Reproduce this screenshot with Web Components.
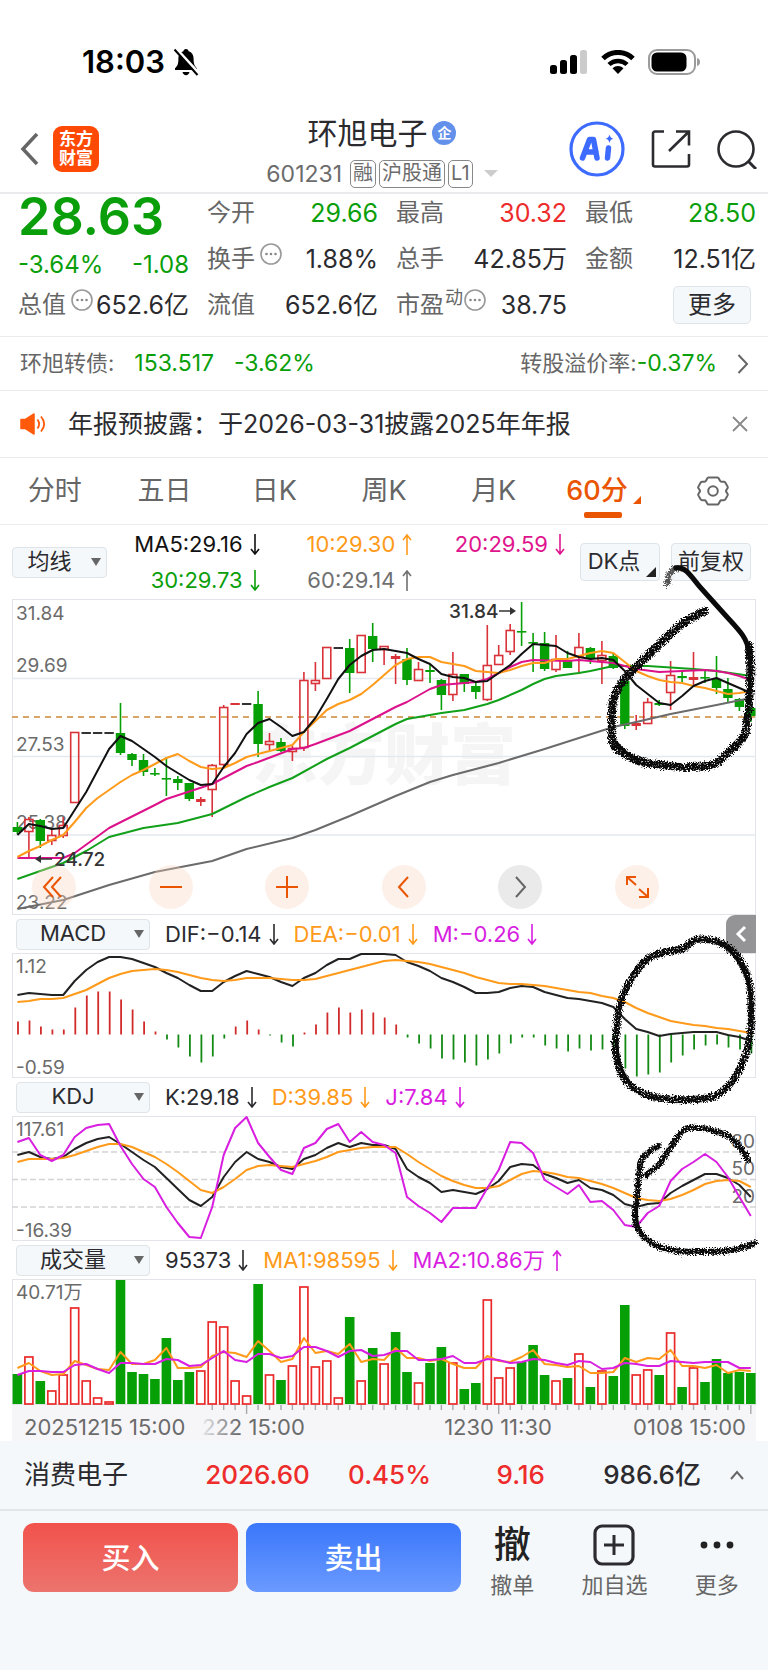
<!DOCTYPE html>
<html lang="zh-CN">
<head>
<meta charset="utf-8">
<meta name="viewport" content="width=device-width, initial-scale=1">
<title>环旭电子 601231</title>
<style>
  :root {
    --up: #ee2c2c;
    --down: #0a9f0a;
    --ink: #2b2b2f;
    --muted: #666;
    --brand: #ea5504;
    --orange: #ff9a1a;
    --pink: #e0148c;
    --violet: #d81ee0;
    --line: #ececef;
    --chip: #f4f8fa;
    --chip-border: #dfe4e8;
  }
  body {
    margin: 0;
    min-height: 100vh;
    background: #f4f8fa;
    color: var(--ink);
    font-family: Inter, "Noto Sans CJK SC", sans-serif;
    font-size: 25px;
  }
</style>
</head>
<body>
<stock-page></stock-page>

<script>
const SVG = (box, w, h, body, extra = '') =>
  `<svg viewBox="${box}" width="${w}" height="${h}" fill="none" aria-hidden="true" ${extra}>${body}</svg>`;

const RESET = `
  * { box-sizing: border-box; }
  button, select { font: inherit; color: inherit; margin: 0; padding: 0; border: 0; background: none; cursor: pointer; }
  a { color: inherit; text-decoration: none; }
  svg { display: block; flex: none; }
  button:focus-visible, select:focus-visible, a:focus-visible { outline: 3px solid #0066cc; }
`;

const define = (name, css, html) => customElements.define(name, class extends HTMLElement {
  connectedCallback() {
    if (this.shadowRoot) return;
    this.attachShadow({ mode: 'open' });
    this.shadowRoot.innerHTML = `<style>${RESET}${css}</style>${typeof html === 'function' ? html(this) : html}`;
  }
});

define('status-bar', `
  :host { display: flex; justify-content: space-between; align-items: flex-end; height: 104px; padding: 0 68px 22px 82px; box-sizing: border-box; background: #fff; color: #000; }
  .side { display: flex; align-items: center; gap: 8px; height: 40px; }
  .right { gap: 13px; }
  time { font-size: 31px; line-height: 40px; font-weight: 600; }
`, `
  <div class="side"><time>18:03</time>
    ${SVG('0 0 26 28', 26, 28, `
      <path d="M13 1c1.6 0 2.5 1 2.6 2.3 3.500 1 5 4 5 7.700 0 5 1 7 3.400 9.200v1.800H2v-1.800C4.400 18 5.400 16 5.400 11c0-3.700 1.500-6.700 5-7.700C10.500 2 11.400 1 13 1z" fill="#000"/>
      <path d="M9.500 24h7c-.4 1.900-1.700 3.200-3.500 3.200S9.900 25.900 9.500 24z" fill="#000"/>
      <path d="M3 .5l23 25" stroke="#fff" stroke-width="3"/><path d="M1.500 1.500L24.500 27" stroke="#000" stroke-width="2"/>`)}
  </div>
  <div class="side right">
    ${SVG('0 0 38 24', 38, 24, `
      <rect x="0" y="15" width="7" height="9" rx="2.500" fill="#000"/><rect x="10" y="10" width="7" height="14" rx="2.500" fill="#000"/>
      <rect x="20" y="5" width="7" height="19" rx="2.500" fill="#000"/><rect x="30" y="0" width="7" height="24" rx="2.500" fill="#cbcbcb"/>`)}
    ${SVG('0 0 34 24', 34, 24, `
      <path d="M2 8.500a21.500 21.500 0 0 1 30 0" stroke="#000" stroke-width="5"/>
      <path d="M8 14.500a13 13 0 0 1 18 0" stroke="#000" stroke-width="4.500"/>
      <path d="M11.500 18.300a8 8 0 0 1 11 0L17 24z" fill="#000"/>`)}
    ${SVG('0 0 52 26', 52, 26, `
      <rect x="1" y="1" width="46" height="24" rx="8" stroke="#9b9b9b" stroke-width="2"/>
      <rect x="3.500" y="3.500" width="35" height="19" rx="5.500" fill="#000"/><path d="M49 9c2 .6 3 2 3 4s-1 3.400-3 4z" fill="#9b9b9b"/>`)}
  </div>
`);

define('app-header', `
  :host { display: grid; grid-template-columns: 1fr auto 1fr; align-items: center; height: 90px; box-sizing: border-box; padding: 0 11px; background: #fff; border-bottom: 2px solid #eaeaec; }
  .left, .right { display: flex; align-items: center; padding-top: 2px; }
  .left { gap: 14px; padding-left: 9px; }
  .right { gap: 26px; justify-content: flex-end; }
  .logo { width: 46px; height: 46px; border-radius: 9px; background: #ff4a06; color: #fff; font-size: 17px; line-height: 19px; font-weight: 700; text-align: center; padding-top: 4px; }
  .mid { display: grid; gap: 9px; justify-items: center; padding: 6px 4px 0 0; }
  h1 { display: flex; align-items: center; gap: 5px; margin: 0; font-size: 30px; line-height: 36px; font-weight: 400; }
  .badge { width: 24px; height: 24px; border-radius: 50%; background: #6390ea; color: #fff; font-size: 14px; line-height: 24px; font-weight: 700; text-align: center; }
  .code { display: flex; align-items: center; gap: 3px; line-height: 28px; color: #6c6c6c; }
  .code b { font-weight: 400; font-size: 23px; margin-right: 5px; }
  .tag { height: 28px; line-height: 24px; padding: 0 2px; border: 1px solid #888; border-radius: 5px; font-size: 20px; }
  .caret { margin-left: 8px; border: 7px solid transparent; border-top: 7px solid #ccc; border-bottom: 0; }
`, `
  <div class="left">
    <button aria-label="返回">${SVG('0 0 19 34', 19, 34, '<path d="M17 2L3 17l14 15" stroke="#666" stroke-width="3.500"/>')}</button>
    <div class="logo">东方<br>财富</div>
  </div>
  <div class="mid">
    <h1>环旭电子<span class="badge">企</span></h1>
    <div class="code"><b>601231</b><span class="tag">融</span><span class="tag">沪股通</span><span class="tag">L1</span><i class="caret"></i></div>
  </div>
  <div class="right">
    <button aria-label="Ai">${SVG('0 0 56 56', 56, 56, `
      <circle cx="28" cy="28" r="26" stroke="#3d6bff" stroke-width="3.200" fill="#fff"/>
      <path d="M13.500 37L20.500 18.500h4L28 37M17 31h10" stroke="#3d6bff" stroke-width="5.500" stroke-linejoin="round" stroke-linecap="round"/>
      <path d="M39.500 27l-1 10" stroke="#3d6bff" stroke-width="5.500" stroke-linecap="round"/>
      <path d="M40.500 13.500c.7 2.700 1.600 3.500 4 4.200-2.400.7-3.300 1.500-4 4.200-.7-2.700-1.600-3.500-4-4.200 2.400-.7 3.300-1.500 4-4.200z" fill="#3d6bff"/>`)}</button>
    <button aria-label="分享">${SVG('0 0 40 40', 40, 40, '<path d="M13 2.500H4a2 2 0 0 0-2 2v31a2 2 0 0 0 2 2h32a2 2 0 0 0 2-2V25M25 2.500h13v14M38 2.500L18 22" stroke="#2c2c30" stroke-width="2.600"/>')}</button>
    <button aria-label="搜索">${SVG('0 0 40 40', 40, 40, '<circle cx="19" cy="20" r="17.500" stroke="#2c2c30" stroke-width="2.600"/><path d="M31 32l8 8" stroke="#2c2c30" stroke-width="3"/>')}</button>
  </div>
`);

const INFO = SVG('0 0 22 22', 22, 22, `
  <circle cx="11" cy="11" r="10" stroke="#999" stroke-width="1.600"/>
  <circle cx="6.500" cy="11" r="1.300" fill="#888"/><circle cx="11" cy="11" r="1.300" fill="#888"/><circle cx="15.500" cy="11" r="1.300" fill="#888"/>`);

// label / value pair; attributes: label, sup, info, tone
define('quote-cell', `
  :host { display: flex; justify-content: space-between; align-items: center; height: 38px; line-height: 38px; white-space: nowrap; }
  .label { display: flex; align-items: center; color: var(--muted); font-size: 24px; }
  svg { margin: 0 0 10px 5px; }
  sup { font-size: 18px; line-height: 18px; margin: 0 -4px 14px 1px; }
  .value.up { color: var(--up); }
  .value.down { color: var(--down); }
`, el => `
  <span class="label">${el.getAttribute('label')}${el.hasAttribute('sup') ? `<sup>${el.getAttribute('sup')}</sup>` : ''}${el.hasAttribute('info') ? INFO : ''}</span>
  <span class="value ${el.getAttribute('tone') ?? ''}"><slot></slot></span>
`);

define('stock-quote', `
  :host { display: grid; grid-template-columns: repeat(4, 1fr); gap: 8px 18px; padding: 0 12px 12px 18px; background: #fff; border-bottom: 1px solid var(--line); }
  .price { grid-row: 1 / 4; display: grid; grid-template-rows: 44px 48px 38px; color: var(--down); }
  .last { font-size: 52px; line-height: 46px; font-weight: 600; }
  .change { display: flex; justify-content: space-between; font-size: 24px; line-height: 54px; }
  quote-cell { color: var(--ink); }
  .more { justify-self: end; margin-right: 5px; width: 78px; height: 38px; font-size: 24px; line-height: 34px; background: var(--chip); border: 1px solid var(--chip-border); border-radius: 5px; }
`, `
  <div class="price">
    <div class="last">28.63</div>
    <div class="change"><span>-3.64%</span><span>-1.08</span></div>
    <quote-cell label="总值" info>652.6亿</quote-cell>
  </div>
  <quote-cell label="今开" tone="down">29.66</quote-cell>
  <quote-cell label="最高" tone="up">30.32</quote-cell>
  <quote-cell label="最低" tone="down">28.50</quote-cell>
  <quote-cell label="换手" info>1.88%</quote-cell>
  <quote-cell label="总手">42.85万</quote-cell>
  <quote-cell label="金额">12.51亿</quote-cell>
  <quote-cell label="流值">652.6亿</quote-cell>
  <quote-cell label="市盈" sup="动" info>38.75</quote-cell>
  <button class="more">更多</button>
`);

define('bond-strip', `
  :host { display: block; background: #fff; border-bottom: 1px solid var(--line); }
  a { display: flex; align-items: center; gap: 20px; height: 53px; padding: 0 19px 0 20px; font-size: 23px; line-height: 49px; color: var(--down); }
  .label { color: var(--muted); font-size: 22px; }
  .rate { margin-left: auto; }
`, `
  <a href="#bond">
    <span class="label">环旭转债:</span><span>153.517</span><span>-3.62%</span>
    <span class="rate"><span class="label">转股溢价率:</span>-0.37%</span>
    ${SVG('0 0 12 20', 12, 20, '<path d="M1.500 1l8.500 9-8.500 9" stroke="#666" stroke-width="2"/>')}
  </a>
`);

define('notice-bar', `
  :host { display: flex; align-items: center; height: 67px; padding: 0 20px; background: #fff; border-bottom: 1px solid var(--line); }
  p { flex: 1; margin: 0 0 0 22px; padding-bottom: 5px; font-size: 25px; }
`, `
  ${SVG('0 0 26 22', 26, 22, `
    <path d="M1 6.500h4.500L14 1v20l-8.500-5.500H1z" fill="#ff5a0a" stroke="#ff5a0a" stroke-linejoin="round" stroke-width="1.500"/>
    <path d="M17.500 6.500c2 2.800 2 6.200 0 9M21 3.500c4 4.700 4 10.300 0 15" stroke="#ff5a0a" stroke-width="1.800"/>`)}
  <p>年报预披露：于2026-03-31披露2025年年报</p>
  <button aria-label="关闭">${SVG('0 0 16 16', 16, 16, '<path d="M1 1l14 14M15 1L1 15" stroke="#888" stroke-width="1.800"/>')}</button>
`);

define('period-tabs', `
  :host { display: grid; grid-template-columns: repeat(7, 1fr); height: 67px; background: #fff; border-bottom: 1px solid var(--line); }
  button { position: relative; display: flex; align-items: center; justify-content: center; padding-bottom: 5px; font-size: 27px; color: #666; }
  button:last-child { padding-bottom: 0; }
  button[aria-selected="true"] { color: var(--brand); font-weight: 500; }
  button[aria-selected="true"]::after { content: ""; position: absolute; bottom: 6px; left: calc(50% - 19px); width: 38px; height: 6px; border-radius: 2px; background: var(--brand); }
  i { align-self: flex-end; margin: 0 0 15px 5px; border: 4px solid transparent; border-right-color: var(--brand); border-bottom-color: var(--brand); }
`, `
  <button role="tab" aria-selected="false">分时</button>
  <button role="tab" aria-selected="false">五日</button>
  <button role="tab" aria-selected="false">日K</button>
  <button role="tab" aria-selected="false">周K</button>
  <button role="tab" aria-selected="false">月K</button>
  <button role="tab" aria-selected="true">60分<i></i></button>
  <button aria-label="设置">${SVG('0 0 32 32', 32, 32, `
    <path d="M11.500 2.500h9c.7 0 1 .4 1.300 1l1.200 2.300c.3.600.8.900 1.500.9h2.400c.7 0 1.100.3 1.400.9l2.300 4c.3.600.3 1.100-.1 1.700l-1.200 1.800c-.4.600-.4 1.200 0 1.800l1.200 1.800c.4.600.4 1.100.1 1.700l-2.300 4c-.3.600-.7.900-1.400.9h-2.400c-.7 0-1.200.3-1.500.9l-1.200 2.300c-.3.600-.6 1-1.300 1h-9c-.7 0-1-.4-1.300-1L9 26.200c-.3-.6-.8-.9-1.500-.9H5.100c-.7 0-1.100-.3-1.400-.9l-2.300-4c-.3-.6-.3-1.100.1-1.700l1.200-1.800c.4-.6.4-1.200 0-1.800l-1.200-1.800c-.4-.6-.4-1.100-.1-1.700l2.300-4c.3-.6.7-.9 1.400-.9h2.400c.7 0 1.200-.3 1.500-.9l1.200-2.300c.3-.6.600-1 1.300-1z" stroke="#666" stroke-width="2"/>
    <circle cx="16" cy="16" r="4.800" stroke="#666" stroke-width="2"/>`)}</button>
`);

// drop-down chip used on the toolbar and above each indicator
define('picker-chip', `
  :host { display: block; position: relative; width: 134px; }
  :host([small]) { width: 95px; }
  select { appearance: none; display: block; width: 100%; height: 31px; padding: 0 20px 3px 0; font-size: 22px; line-height: 26px; text-align: center; text-align-last: center; background: var(--chip); border: 1px solid var(--chip-border); border-radius: 4px; }
  i { position: absolute; right: 6px; top: 11px; border: 5px solid transparent; border-top: 8px solid #666; border-bottom: 0; pointer-events: none; }
`, el => `<select aria-label="${el.getAttribute('label')}"><option>${el.getAttribute('value')}</option></select><i></i>`);

define('ma-toolbar', `
  :host { display: flex; align-items: center; height: 74px; padding: 0 17px 0 12px; background: #fff; }
  .legend { flex: 1; display: grid; grid-template-columns: repeat(3, 1fr); margin-right: 15px; font-size: 22px; line-height: 36px; text-align: right; white-space: nowrap; }
  .legend svg { display: inline-block; vertical-align: -3px; margin-left: 7px; }
  .chip { position: relative; width: 80px; height: 38px; padding-bottom: 3px; font-size: 22px; line-height: 32px; background: var(--chip); border: 1px solid var(--chip-border); border-radius: 4px; white-space: nowrap; }
  .chip + .chip { margin-left: 11px; }
  .chip i { position: absolute; right: 3px; bottom: 3px; border: 5px solid transparent; border-right-color: #222; border-bottom-color: #222; }
  .dk { padding-right: 12px; }
`, `
  <picker-chip small label="主图指标" value="均线"></picker-chip>
  <div class="legend">
    <span style="color:#111">MA5:29.16${arrow('down')}</span>
    <span style="color:var(--orange)">10:29.30${arrow('up')}</span>
    <span style="color:var(--pink)">20:29.59${arrow('down')}</span>
    <span style="color:var(--down)">30:29.73${arrow('down')}</span>
    <span style="color:#707070">60:29.14${arrow('up')}</span>
  </div>
  <button class="chip dk">DK点<i></i></button>
  <button class="chip">前复权</button>
`);

function arrow(dir) {
  const d = dir === 'up' ? 'M5 21V1M1 6l4-5 4 5' : 'M5 0v20M1 15l4 5 4-5';
  return SVG('0 0 10 21', 10, 21, `<path d="${d}" stroke="currentColor" stroke-width="1.600"/>`);
}

// ---- chart data: 65 hourly bars, y values in chart units ----
const STEP = 11.46;
const cx = i => +(5.4 + STEP * i).toFixed(1);
const poly = (pts, color, w = 2) =>
  `<polyline points="${pts.map(([i, y]) => `${cx(i)},${y}`).join(' ')}" stroke="${color}" stroke-width="${w}" stroke-linejoin="round"/>`;
const series = (ys, color) => poly(ys.map((y, i) => [i, y]), color);
const text = (x, y, s, attrs = '') => `<text x="${x}" y="${y}" dominant-baseline="central" ${attrs}>${s}</text>`;

// [kind, high, low, bodyTop, bodyBottom]; '-' and '=' mark flat bars
const CANDLES = [
  ['g',223,235,228,233],['r',218,259,220,233],['g',220,249,221,242],['r',231,246,236,242],['r',218,239,226,237],
  ['r',133,204,133,204],['-',134],['-',134],['-',134],['g',104,156,134,154],['g',154,167,155,161],['g',155,177,161,173],
  ['g',169,177,174,175],['g',158,197,179,180],['g',177,191,180,184],['g',184,202,184,200],['r',198,207,200,203],
  ['r',165,218,166,191],['r',106,168,108,166],['=',105],['-',105],['g',92,158,105,145],['r',134,151,142,146],
  ['g',139,153,143,152],['r',147,162,149,153],['r',73,152,81,149],['r',63,92,81,85],['r',48,80,48,80],['-',49],
  ['g',40,94,49,74],['r',36,74,36,74],['g',24,63,37,50],['r',47,66,47,51],['r',55,85,57,60],['g',49,86,60,81],
  ['r',63,82,70,82],['g',66,84,71,73],['g',80,111,81,96],['r',53,102,75,96],['g',75,93,75,85],['g',83,100,87,93],
  ['r',26,102,66,101],['r',46,66,56,66],['r',25,56,31,53],['g',3,47,32,33],['g',34,73,43,44],['g',33,72,44,70],
  ['r',36,73,60,71],['g',52,69,62,69],['r',34,75,48,58],['g',48,65,49,60],['r',42,85,56,62],['g',54,70,57,69],
  ['g',80,130,82,127],['r',116,131,124,127],['r',99,125,103,125],['g',101,107,104,106],['r',62,111,76,94],
  ['g',73,83,77,79],['r',53,86,78,81],['g',72,84,78,79],['g',57,95,80,89],['g',79,104,90,99],['g',99,112,100,108],['g',108,123,109,117]
];
const MA5 = [[0,236],[1,225],[2,227],[3,230],[4,229],[6,193],[8,150],[9,137],[10,142],[11,150],[12,158],[13,167],[14,174],[15,181],[16,186],[17,185],[18,168],[19,154],[20,135],[21,124],[22,120],[23,128],[24,137],[25,133],[26,119],[27,100],[28,80],[29,66],[30,57],[31,51],[32,50],[33,52],[34,54],[35,60],[36,65],[37,75],[38,78],[39,79],[40,83],[41,82],[42,74],[43,66],[44,55],[45,45],[46,46],[47,47],[48,54],[49,58],[50,60],[51,59],[52,61],[53,72],[54,86],[55,95],[56,104],[57,106],[58,97],[59,87],[60,82],[61,79],[62,84],[63,89],[64,94]];
const MA10 = [258,252,247,241,236,223,209,199,191,183,176,171,165,159,155,162,168,170,169,164,158,155,152,149,146,133,122,111,105,101,95,86,76,66,60,58,58,63,65,67,72,73,74,71,67,64,64,60,60,57,54,52,54,63,72,77,81,83,84,87,89,92,95,94,92];
const MA20 = [[0,259],[4,259],[5,254],[8,229],[12,206],[13,200],[17,185],[20,167],[21,163],[24,150],[25,149],[26,145],[29,132],[33,108],[34,103],[36,90],[37,86],[39,84],[40,83],[41,80],[42,74],[43,68],[44,63],[45,61],[48,62],[49,61],[52,64],[53,67],[54,70],[56,73],[58,72],[60,71],[61,72],[62,74],[63,77],[64,81]];
const MA30 = [[0,280],[4,264],[6,252],[8,238],[11,229],[14,224],[16,218],[17,215],[20,198],[22,188],[24,179],[27,160],[29,149],[33,125],[34,120],[37,114],[39,111],[41,105],[42,101],[44,91],[45,85],[46,80],[47,77],[49,74],[50,72],[52,67],[55,67],[59,70],[61,72],[64,77]];
const MA60 = [[0,310],[4,301],[8,286],[12,273],[17,262],[20,250],[24,239],[26,231],[29,217],[33,197],[36,183],[38,176],[42,164],[46,150],[52,128],[54,123],[57,115],[61,106],[64,99]];

const DIF = [42,40,41,42,42,28,17,9,4,4,6,10,14,20,25,32,38,38,29,23,18,21,24,29,33,25,20,12,6,6,1,1,1,2,9,13,18,25,29,34,40,40,39,35,33,34,39,42,45,46,48,50,54,66,76,79,83,81,80,79,79,79,82,84,88];
const DEA = [49,48,46,46,45,41,37,31,25,21,18,17,16,17,19,22,25,27,28,27,25,25,25,26,27,27,26,23,20,17,14,11,8,7,8,9,11,14,17,20,24,27,30,31,31,32,33,35,37,39,40,43,45,49,55,60,64,68,70,72,73,75,76,78,80];
const HIST = [13,14,8,5,5,27,39,43,43,35,25,13,3,-5,-13,-22,-28,-22,-4,8,14,5,-1,-8,-12,2,10,22,27,22,25,22,17,10,-3,-9,-14,-24,-25,-28,-31,-25,-19,-9,-3,-3,-11,-14,-17,-14,-16,-15,-17,-34,-42,-40,-38,-28,-21,-15,-11,-10,-13,-15,-19];

const K = [39,36,41,43,41,33,27,23,21,28,36,44,51,62,73,84,90,81,61,46,36,43,46,51,53,43,39,32,27,31,27,29,29,33,53,61,67,76,74,76,78,73,65,51,48,49,58,62,67,64,72,74,79,88,91,88,87,77,70,64,58,58,62,69,81];
const D = [46,43,43,43,42,39,35,31,28,28,31,36,41,48,56,65,74,77,71,63,54,50,49,50,51,48,45,41,36,34,32,31,31,31,38,46,53,60,65,69,72,72,70,64,58,55,56,58,61,62,65,68,72,77,82,84,85,83,79,74,68,65,64,65,71];
const J = [26,22,39,45,39,21,12,9,8,30,48,63,71,91,107,121,122,91,39,12,1,27,41,54,58,32,27,13,8,26,16,26,29,37,81,90,97,106,92,92,92,72,54,26,27,37,64,71,78,69,86,85,94,109,111,97,90,65,53,46,38,46,61,81,100];

const VOLUME = 'g95 r77 g102 r111 r95 r28 r101 r118 r122 g1 g93 g95 g100 g59 g101 g93 r91 r42 r47 r101 r116 g5 r95 g101 r86 r7 r87 r81 r118 g38 r101 g69 r84 g53 g93 r103 g84 g68 r83 g110 g104 r20 r98 r88 g83 g66 g96 r101 g99 r74 g108 r91 g97 g26 r95 r90 g96 r53 g108 r88 g103 g80 g94 g93 g94'.split(' ');
const VMA1 = [89,84,92,96,95,82,86,90,91,73,85,85,81,69,89,89,88,77,73,74,78,62,72,83,80,59,74,72,75,65,83,80,81,69,79,79,82,80,85,89,89,77,82,83,78,71,85,86,88,87,94,94,93,79,83,79,80,71,87,87,89,86,94,91,92];
const VMA2 = [96,92,92,93,93,86,85,90,94,84,84,85,85,80,81,87,86,79,72,81,83,75,75,79,77,68,68,72,78,72,71,77,76,72,72,81,81,80,77,84,84,80,81,84,83,80,81,84,86,82,83,90,89,84,85,87,87,82,83,84,83,83,83,89,89];

const GREEN = '#06a006', RED = '#d9333a', GRAY = '#6b6b6b';

function candle([kind, hi, lo, top, bottom], i) {
  const x = cx(i);
  if (kind === '-' || kind === '=') return `<path d="M${x - 4.7} ${hi}h9.400" stroke="${kind === '-' ? '#333' : RED}" stroke-width="2"/>`;
  const color = kind === 'g' ? GREEN : RED;
  const h = bottom - top;
  if (kind === 'g' || h < 4) {
    return `<path d="M${x} ${hi}V${lo}" stroke="${color}" stroke-width="1.600"/><rect x="${x - 4.7}" y="${top}" width="9.400" height="${Math.max(h, 1.6)}" fill="${color}"/>`;
  }
  return `<path d="M${x} ${hi}V${top}M${x} ${bottom}V${lo}" stroke="${color}" stroke-width="1.600"/><rect x="${x - 4}" y="${top + .5}" width="8" height="${h - 1}" stroke="${color}" stroke-width="1.600"/>`;
}

const frame = h => `<rect x=".5" y=".5" width="743" height="${h - 1}" stroke="#e2e4ea"/>`;

const CHART_CSS = `
  :host { display: block; position: relative; padding: 0 12px; background: #fff; }
  svg.plot { width: 100%; height: auto; overflow: visible; }
  text { fill: #6b6b6b; font-size: 19px; }
`;

const ROUND = {
  first: ['最早', 'M15 6L6 16l9 10M23 6l-9 10 9 10'],
  minus: ['缩小', 'M5 16h22'],
  plus: ['放大', 'M5 16h22M16 5v22'],
  prev: ['向前', 'M20 6l-9 10 9 10'],
  next: ['向后', 'M12 6l9 10-9 10'],
  full: ['全屏', 'M6 14V6h9M6 6l9 8M18 18l9 8M27 17v9h-9']
};

define('kline-chart', `${CHART_CSS}
  .mark { fill: #333; font-weight: 500; }
  .water { fill: #f5f5f6; font-size: 66px; font-weight: 900; }
  nav { position: absolute; left: 32px; right: 109px; bottom: 6px; display: flex; justify-content: space-between; }
  nav button { display: grid; place-items: center; width: 44px; height: 44px; border-radius: 50%; background: rgba(249, 212, 192, .35); color: var(--brand); }
  nav .next { background: #eaeaea; color: #666; }
`, `
  ${SVG('0 0 744 316', '100%', 316, `
    ${frame(316)}
    ${text(372, 156, '东方财富', 'class="water" text-anchor="middle"')}
    <path d="M0 79.500h744M0 157.500h744M0 236h744" stroke="#e4e9f0" stroke-width="1.500"/>
    <path d="M0 118h744" stroke="#d8a468" stroke-width="1.800" stroke-dasharray="6 5"/>
    ${text(4, 14, '31.84')}${text(4, 66, '29.69')}${text(4, 145, '27.53')}${text(4, 223, '25.38')}${text(4, 303, '23.22')}
    ${CANDLES.map(candle).join('')}
    ${poly(MA60, GRAY)}${poly(MA30, '#12a01a')}${poly(MA20, '#dc128a')}${series(MA10, '#ff9a1a')}${poly(MA5, '#111')}
    ${text(437, 12, '31.84', 'class="mark"')}<path d="M487 12h14" stroke="#333" stroke-width="1.500"/><path d="M498 8l6 4-6 4z" fill="#333"/>
    ${text(42, 260, '24.72', 'class="mark"')}<path d="M26 260h14" stroke="#333" stroke-width="1.500"/><path d="M29 256l-6 4 6 4z" fill="#333"/>
  `, 'class="plot"')}
  <nav>${Object.entries(ROUND).map(([k, [label, d]]) =>
    `<button class="${k}" aria-label="${label}">${SVG('0 0 32 32', 32, 32, `<path d="${d}" stroke="currentColor" stroke-width="2"/>`)}</button>`).join('')}</nav>
`);

define('macd-chart', CHART_CSS, SVG('0 0 744 125', '100%', 125, `
  ${frame(125)}
  ${text(4, 13, '1.12')}${text(4, 114, '-0.59')}
  ${HIST.map((v, i) => `<path d="M${cx(i) + .6} 81.500v${-v}" stroke="${v > 0 ? '#d02a2a' : '#138a13'}" stroke-width="1.800"/>`).join('')}
  ${series(DIF, '#222')}${series(DEA, '#ff9a1a')}
`, 'class="plot"'));

define('kdj-chart', CHART_CSS, SVG('0 0 744 125', '100%', 125, `
  ${frame(125)}
  <path d="M0 36h744M0 63.500h744M0 91h744" stroke="#d4d4d8" stroke-width="1.600" stroke-dasharray="6 3"/>
  ${text(4, 13, '117.61')}${text(4, 114, '-16.39')}
  ${text(743, 25, '80', 'text-anchor="end"')}${text(743, 52, '50', 'text-anchor="end"')}${text(743, 80, '20', 'text-anchor="end"')}
  ${series(K, '#222')}${series(D, '#ff9a1a')}${series(J, '#d81ee0')}
`, 'class="plot"'));

define('volume-chart', `${CHART_CSS}
  .time { font-size: 22px; }
`, SVG('0 0 744 162', '100%', 162, `
  <defs><linearGradient id="fade" gradientUnits="userSpaceOnUse" x1="186" y1="0" x2="226" y2="0">
    <stop offset="0" stop-color="#f6f6f9"/><stop offset="1" stop-color="#6b6b6b"/></linearGradient></defs>
  ${frame(126)}
  <rect x="0" y="126" width="744" height="36" fill="#f6f6f9"/>
  ${text(4, 13, '40.71万')}
  ${VOLUME.map((v, i) => {
    const top = +v.slice(1);
    return v[0] === 'g'
      ? `<rect x="${cx(i) - 4.8}" y="${top}" width="9.600" height="${125 - top}" fill="${GREEN}"/>`
      : `<rect x="${cx(i) - 4}" y="${top + 1}" width="8" height="${124 - top}" stroke="#ea2a2a" stroke-width="1.700" fill="#fff"/>`;
  }).join('')}
  ${series(VMA1, '#ff9a1a')}${series(VMA2, '#d81ee0')}
  ${VOLUME.map((_, i) => i < 17 ? '' : `<path d="M${cx(i)} 126v${[20, 42, 64].includes(i) ? 9 : 5}" stroke="#a8a8ac" stroke-width="1.400"/>`).join('')}
  ${text(12, 148, '20251215 15:00', 'class="time"')}
  ${text(190, 148, '222 15:00', 'class="time" style="fill:url(#fade)"')}
  ${text(486, 148, '1230 11:30', 'class="time" text-anchor="middle"')}
  ${text(734, 148, '0108 15:00', 'class="time" text-anchor="end"')}
`, 'class="plot"'));

define('indicator-head', `
  :host { display: flex; align-items: center; height: 38px; padding: 0 12px 0 16px; background: #fff; font-size: 22px; white-space: nowrap; }
  .values { flex: 1; display: flex; align-items: center; gap: 15px; margin-left: 15px; line-height: 34px; }
  .values span { display: flex; align-items: center; gap: 7px; }
  .fold { align-self: stretch; display: grid; place-items: center; width: 30px; background: #949496; border-radius: 9px 0 0 0; }
`, el => `
  <picker-chip label="副图指标" value="${el.getAttribute('name')}"></picker-chip>
  <div class="values">${JSON.parse(el.getAttribute('values')).map(([s, dir, color]) =>
    `<span style="color:var(--${color})">${s}${arrow(dir)}</span>`).join('')}</div>
  ${el.hasAttribute('foldable') ? `<button class="fold" aria-label="展开">${SVG('0 0 12 18', 12, 18, '<path d="M10 2L3 9l7 7" stroke="#fff" stroke-width="3"/>')}</button>` : ''}
`);

// freehand pen marks laid over the charts; the filter roughens and grains them
define('pen-marks', `
  :host { position: absolute; inset: 0; pointer-events: none; overflow: hidden; }
  svg { width: 100%; height: auto; }
`, SVG('0 525 768 917', '100%', 917, `
  <filter id="rough" filterUnits="userSpaceOnUse" x="0" y="525" width="768" height="917" color-interpolation-filters="sRGB">
    <feTurbulence type="fractalNoise" baseFrequency=".7" numOctaves="2" seed="4" result="noise"/>
    <feDisplacementMap in="SourceGraphic" in2="noise" scale="7" xChannelSelector="R" yChannelSelector="G" result="edge"/>
    <feColorMatrix in="noise" values="0 0 0 0 0  0 0 0 0 0  0 0 0 0 0  0 0 5 0 -1.100" result="grain"/>
    <feComposite in="edge" in2="grain" operator="in" result="dust"/>
    <feGaussianBlur in="dust" stdDeviation=".4"/>
  </filter>
  <g filter="url(#rough)" stroke="#0a0a0a" stroke-linecap="round" stroke-linejoin="round">
    <path d="M667 584C668 574 671 569 678 568" stroke-width="6" stroke="#555"/>
    <path d="M749 646C752 668 750 685 749 703C748 716 747 728 744 736C738 745 731 749 717 763C708 768 697 766 687 767C672 767 660 765 647 763C638 762 628 757 615 747C610 738 611 728 612 720C612 708 612 700 617 690C622 682 630 672 640 663C654 650 665 637 687 620L705 611" stroke-width="8"/>
    <path d="M686 948C678 950 672 951 664 952C656 954 650 956 645 961C636 970 625 987 621 1002C617 1012 617 1020 617 1028C615 1040 614 1049 617 1060C619 1074 625 1083 637 1090C645 1095 652 1097 661 1098C678 1101 694 1100 708 1098C719 1096 726 1089 733 1081C740 1070 746 1056 749 1042C751 1030 752 1018 751 1008C751 998 751 990 749 982C747 973 743 965 739 958C734 951 727 945 718 942C711 939 706 940 701 939C694 939 690 942 686 947" stroke-width="7"/>
    <path d="M646 1175C652 1171 657 1167 661 1162L674 1142C679 1134 683 1130 688 1128C697 1127 704 1128 711 1130C719 1132 726 1135 731 1138C739 1145 744 1152 748 1160" stroke-width="6"/>
    <path d="M659 1146C652 1149 646 1154 641 1160C639 1167 640 1172 639 1178C637 1186 637 1192 637 1198C635 1208 634 1218 636 1226C640 1234 645 1238 650 1242C658 1248 664 1248 672 1250C682 1252 690 1252 699 1252C710 1252 721 1252 731 1250C741 1249 748 1246 755 1243" stroke-width="6"/>
  </g>
  <g stroke="#0a0a0a" stroke-linecap="round">
    <path d="M676 568C686 566 692 578 700 587L727 617C740 631 747 638 749 652" stroke-width="5"/>
    <path d="M749 655C751 668 750 685 749 703M616 742C622 750 628 755 638 760M720 943C735 952 745 970 749 986C751 996 751 1005 751 1020M617 1040C617 1058 620 1070 630 1083M637 1200C636 1215 636 1226 642 1234" stroke-width="3"/>
  </g>
`));

define('sector-bar', `
  :host { display: block; border-bottom: 2px solid #e2e6e8; background: #f4f8fa; }
  a { display: grid; grid-template-columns: 148px 171px 88px 114px 156px 1fr; align-items: center; height: 68px; padding: 0 24px; font-size: 26px; line-height: 60px; font-weight: 500; text-align: right; color: var(--up); white-space: nowrap; }
  .name { font-weight: 400; text-align: left; color: var(--ink); }
  .idx { text-align: center; }
  .amount { color: var(--ink); }
  svg { justify-self: end; }
`, `
  <a href="#sector">
    <span class="name">消费电子</span><span class="idx">2026.60</span><span>0.45%</span><span>9.16</span><span class="amount">986.6亿</span>
    ${SVG('0 0 14 10', 14, 10, '<path d="M1 9l6-7 6 7" stroke="#666" stroke-width="2"/>')}
  </a>
`);

define('trade-bar', `
  :host { display: flex; gap: 8px; padding: 12px 0 77px 23px; background: #f4f8fa; }
  .deal { flex: 215; height: 69px; padding-bottom: 3px; border-radius: 11px; color: #fff; font-size: 29px; font-weight: 500; }
  .buy { background: linear-gradient(#f2524c, #ec746e); }
  .sell { background: linear-gradient(#3a77fb, #6b9aff); }
  .acts { flex: 307; display: grid; grid-template-columns: repeat(3, 1fr); margin-left: -8px; }
  .acts button { display: grid; grid-template-rows: 43px 30px; row-gap: 4px; justify-items: center; align-items: center; align-content: start; height: 77px; margin-bottom: -8px; font-size: 22px; line-height: 30px; color: #666; }
  .big { font-size: 37px; line-height: 42px; font-weight: 500; color: #222; }
`, `
  <button class="deal buy">买入</button>
  <button class="deal sell">卖出</button>
  <div class="acts">
    <button><span class="big">撤</span>撤单</button>
    <button>${SVG('0 0 42 42', 42, 42, '<rect x="2" y="2" width="38" height="38" rx="7" stroke="#2c2c30" stroke-width="3.200"/><path d="M11 21h20M21 11v20" stroke="#2c2c30" stroke-width="3"/>')}加自选</button>
    <button>${SVG('0 0 34 8', 34, 8, '<circle cx="4" cy="4" r="3.400" fill="#222"/><circle cx="17" cy="4" r="3.400" fill="#222"/><circle cx="30" cy="4" r="3.400" fill="#222"/>')}更多</button>
  </div>
`);

define('stock-page', `
  :host { display: block; }
  .charts { position: relative; }
`, `
  <status-bar></status-bar>
  <app-header></app-header>
  <stock-quote></stock-quote>
  <bond-strip></bond-strip>
  <notice-bar></notice-bar>
  <period-tabs role="tablist"></period-tabs>
  <div class="charts">
    <ma-toolbar></ma-toolbar>
    <kline-chart></kline-chart>
    <indicator-head name="MACD" foldable values='[["DIF:−0.14","down","ink"],["DEA:−0.01","down","orange"],["M:−0.26","down","violet"]]'></indicator-head>
    <macd-chart></macd-chart>
    <indicator-head name="KDJ" values='[["K:29.18","down","ink"],["D:39.85","down","orange"],["J:7.84","down","violet"]]'></indicator-head>
    <kdj-chart></kdj-chart>
    <indicator-head name="成交量" values='[["95373","down","ink"],["MA1:98595","down","orange"],["MA2:10.86万","up","violet"]]'></indicator-head>
    <volume-chart></volume-chart>
    <pen-marks></pen-marks>
  </div>
  <sector-bar></sector-bar>
  <trade-bar></trade-bar>
`);
</script>
</body>
</html>
